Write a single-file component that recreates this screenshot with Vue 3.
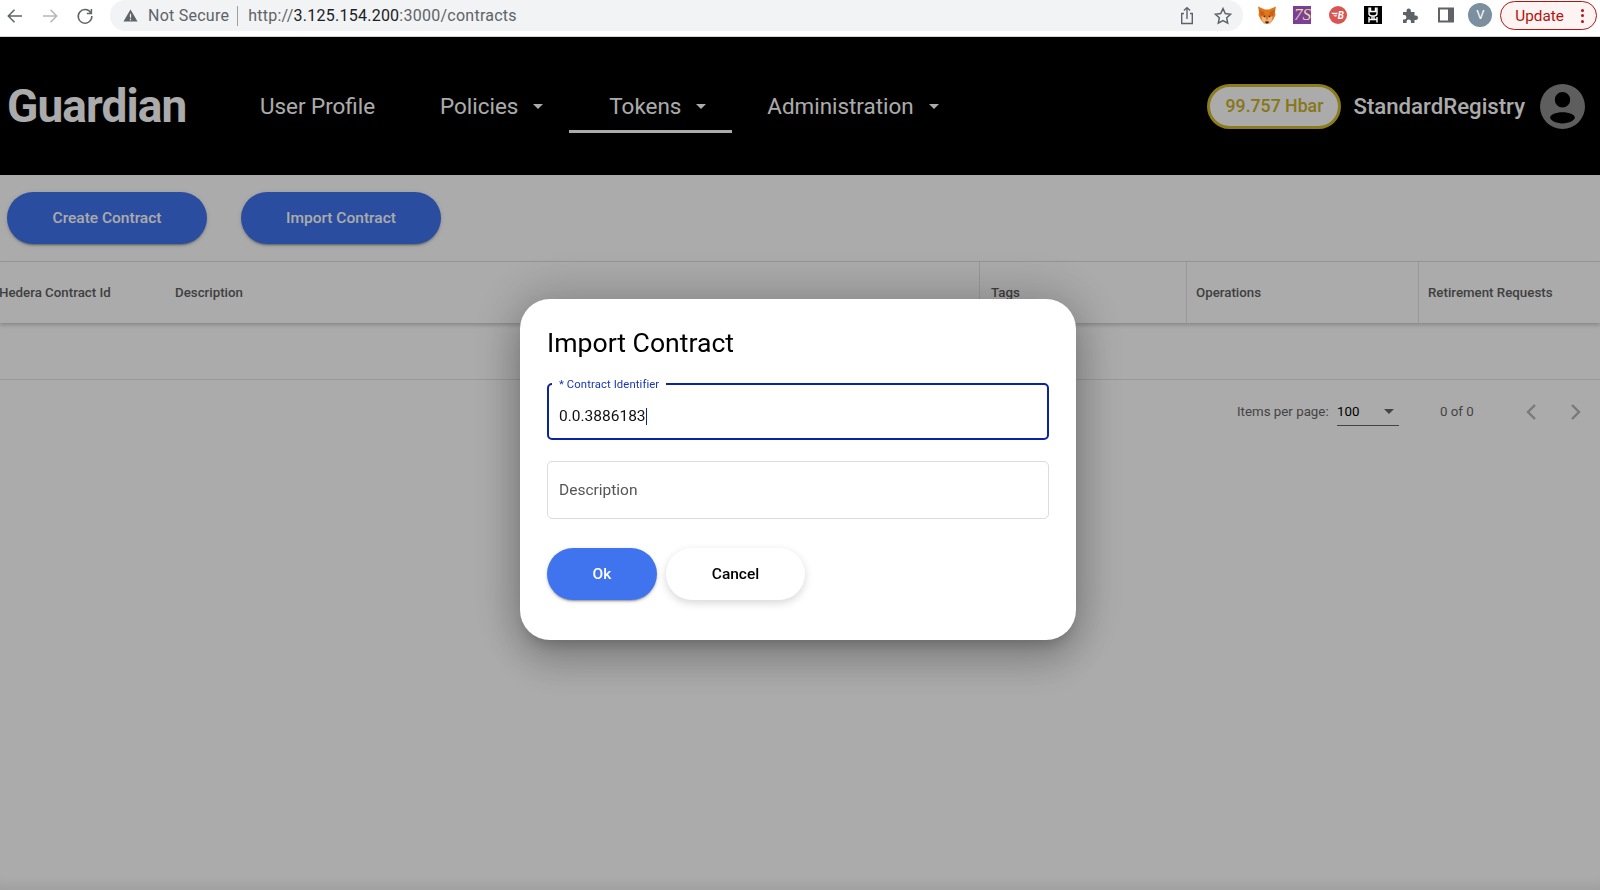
<template>
  <div class="page">
    <!-- browser toolbar -->
    <div class="chrome">
      <div class="nav-btns">
        <svg class="ic" viewBox="0 0 20 20" fill="none" stroke="#5f6368" stroke-width="1.5">
          <path d="M17 10H3.500M9.500 3.800 3.300 10l6.200 6.200" />
        </svg>
        <svg class="ic" viewBox="0 0 20 20" fill="none" stroke="#b4b7ba" stroke-width="1.5">
          <path d="M3 10h13.500M10.500 3.800l6.200 6.200-6.200 6.200" />
        </svg>
        <svg class="ic" viewBox="0 0 20 20" fill="none" stroke="#5f6368" stroke-width="1.5">
          <path d="M15.800 6.800A6.800 6.800 0 1 0 16.800 10" />
          <path d="M16.400 3v4.600h-4.600" />
        </svg>
      </div>
      <div class="omnibox">
        <svg class="warn" viewBox="0 0 16 16"><path d="M8 1.500 15.500 14.500H.5Z" fill="#5f6368" /><path d="M8 6v4.500M8 11.500v1.500" stroke="#f1f3f4" stroke-width="1.300" /></svg>
        <span class="secure">Not Secure</span>
        <span class="sep"></span>
        <span class="url">http://<b>3.125.154.200</b>:3000/contracts</span>
        <div class="omni-right">
          <svg class="ic" viewBox="0 0 20 20" fill="none" stroke="#5f6368" stroke-width="1.400">
            <path d="M7 7.500H4.700v10h10.600v-10H13M10 13V1.800M6.900 4.600 10 1.600l3.100 3" />
          </svg>
          <svg class="ic" viewBox="0 0 20 20" fill="none" stroke="#5f6368" stroke-width="1.500">
            <path d="m10 2.600 2.300 4.900 5.300.7-3.900 3.600 1 5.300-4.700-2.600-4.700 2.600 1-5.300-3.900-3.600 5.300-.7Z" />
          </svg>
        </div>
      </div>
      <div class="extensions">
        <svg class="ext" viewBox="0 0 18 18">
          <path d="M0 .5 7 3.500h4l7-3-1 5.500L17.500 9 15 14l-3 3.500H6L3 14 .5 9 1 6Z" fill="#e2761b" />
          <path d="M1 3.500 6 6 6.500 9 3 10ZM17 3.500 12 6 11.500 9 15 10Z" fill="#c9601a" />
          <path d="M3.500 10.500H7l2 4-3 3-2-3ZM14.500 10.500H11l-2 4 3 3 2-3Z" fill="#efb27a" />
          <path d="M5 10 7.500 9.500 7 11.500ZM13 10l-2.500-.5.500 2Z" fill="#3a2a1c" />
          <path d="M7 15.500h4L10 17.500H8Z" fill="#3a2a1c" />
        </svg>
        <div class="ext ext-zs">7S</div>
        <svg class="ext" viewBox="0 0 18 18">
          <circle cx="9" cy="9" r="9" fill="#d85552" />
          <path d="M1.800 6.800h7l-.6 1.500H4ZM4.200 9.200H8l-.5 1.400H5.800Z" fill="#fff" />
          <text x="8.700" y="13" class="ext-b">B</text>
        </svg>
        <svg class="ext" viewBox="0 0 18 18">
          <rect width="18" height="18" fill="#000" />
          <path d="M5 1.500v6c0 2 1.500 2.500 4 2.500s4-.5 4-2.500v-6M6.500 1.500v4h5v-4M5 16.500V11M13 16.500V11M5 13.500h8M8 10v3.500M10 10v3.500" fill="none" stroke="#fff" stroke-width="1.400" />
        </svg>
        <svg class="ext ext-sm" viewBox="0 0 16 16">
          <path d="M1 5h3.500V3.700a2.200 2.200 0 0 1 4.400 0V5h3.600v3.500h1.300a2.200 2.200 0 0 1 0 4.400h-1.300V16H9v-1.300a2.200 2.200 0 0 0-4.400 0V16H1v-3.600h1.200a2.200 2.200 0 0 0 0-4.400H1Z" fill="#5f6368" />
        </svg>
        <svg class="ext ext-sm" viewBox="0 0 16 16">
          <rect x="1" y="1.500" width="14" height="13" fill="none" stroke="#5f6368" stroke-width="2" />
          <rect x="10" y="1.500" width="5" height="13" fill="#5f6368" />
        </svg>
        <div class="profile">V</div>
      </div>
      <div class="update">
        <span>Update</span>
        <span class="dots"><i></i><i></i><i></i></span>
      </div>
    </div>

    <!-- app header -->
    <header class="app-header">
      <div class="brand">Guardian</div>
      <nav class="menu">
        <a v-for="item in menu" :key="item.label" class="menu-item" :class="{ active: item.active, plain: !item.caret }">
          {{ item.label }}
          <span v-if="item.caret" class="caret"></span>
        </a>
      </nav>
      <div class="account">
        <div class="balance">99.757 Hbar</div>
        <div class="user">StandardRegistry</div>
        <svg class="avatar" viewBox="0 0 24 24">
          <path fill-rule="evenodd" d="M12 0a12 12 0 1 1 0 24 12 12 0 0 1 0-24Zm0 4.300a4.100 4.100 0 1 0 0 8.200 4.100 4.100 0 0 0 0-8.200ZM12 15c-3.600 0-6.600 1.300-6.600 2.900 0 1.500 3 3.100 6.600 3.100s6.600-1.600 6.600-3.100c0-1.600-3-2.900-6.600-2.900Z" fill="#8c8c8c" />
        </svg>
      </div>
    </header>

    <!-- contracts page -->
    <main class="content">
      <div class="actions">
        <button class="btn btn-primary wide">Create Contract</button>
        <button class="btn btn-primary wide">Import Contract</button>
      </div>
      <div class="table-head">
        <div class="th first">Hedera Contract Id</div>
        <div class="th">Description</div>
        <div class="th bordered tags">Tags</div>
        <div class="th bordered">Operations</div>
        <div class="th bordered">Retirement Requests</div>
      </div>
      <div class="table-empty"></div>
      <div class="paginator">
        <span class="per-page">Items per page:</span>
        <div class="page-select">
          <span>100</span>
          <span class="select-arrow"></span>
        </div>
        <span class="range">0 of 0</span>
        <svg class="chev" viewBox="0 0 24 24" fill="none" stroke="#b5b5b5" stroke-width="2.400"><path d="M15 5l-7 7 7 7" /></svg>
        <svg class="chev" viewBox="0 0 24 24" fill="none" stroke="#b5b5b5" stroke-width="2.400"><path d="M9 5l7 7-7 7" /></svg>
      </div>
    </main>

    <!-- dialog -->
    <div class="overlay">
      <div class="dialog">
        <h2 class="dialog-title">Import Contract</h2>
        <div class="field focused">
          <label class="field-label">* Contract Identifier</label>
          <div class="field-value">{{ contractId }}<span class="text-caret"></span></div>
        </div>
        <div class="field">
          <input class="field-input" placeholder="Description" />
        </div>
        <div class="dialog-actions">
          <button class="btn btn-ok">Ok</button>
          <button class="btn btn-cancel">Cancel</button>
        </div>
      </div>
    </div>
  </div>
</template>

<script setup>
import { ref } from 'vue'

const contractId = ref('0.0.3886183')

const menu = [
  { label: 'User Profile', caret: false },
  { label: 'Policies', caret: true },
  { label: 'Tokens', caret: true, active: true },
  { label: 'Administration', caret: true }
]
</script>

<style>
html,
body {
  margin: 0;
  background: #fff;
  overflow: hidden;
}
</style>

<style scoped>
.page {
  height: 890px;
  display: flex;
  flex-direction: column;
  font-family: Roboto, "Liberation Sans", sans-serif;
  color: #000;
  overflow: hidden;
}

.chrome {
  height: 36px;
  flex: none;
  display: flex;
  align-items: flex-start;
  background: #fff;
  border-bottom: 1px solid #d4d4d4;
  box-sizing: content-box;
}

.nav-btns {
  display: flex;
  gap: 15px;
  padding: 6px 0 0 5px;
  width: 110px;
  box-sizing: border-box;
}

.ic {
  width: 20px;
  height: 20px;
  display: block;
}

.omnibox {
  width: 1133px;
  height: 31px;
  display: flex;
  align-items: center;
  background: #f1f3f4;
  border-radius: 16px;
  padding-left: 13px;
  box-sizing: border-box;
  font-size: 16px;
  letter-spacing: 0.25px;
  color: #5f6368;
}

.warn {
  width: 15px;
  height: 15px;
  margin-right: 10px;
}

.sep {
  width: 1px;
  height: 20px;
  background: #9aa0a6;
  margin: 0 10px 0 8px;
}

.url b {
  font-weight: 400;
  color: #202124;
}

.omni-right {
  margin-left: auto;
  display: flex;
  gap: 16px;
  padding-right: 10px;
}

.extensions {
  display: flex;
  align-items: center;
  height: 30px;
  padding-left: 15px;
  gap: 17.400px;
}

.ext {
  width: 18px;
  height: 18px;
  display: block;
}

.ext-sm {
  width: 16px;
  height: 16px;
  margin-left: 2.500px;
}

.ext-zs {
  background: #7b3f98;
  color: #e8d9a0;
  font: italic 17px/18px "Liberation Serif", serif;
  text-align: center;
  overflow: hidden;
}

.ext-b {
  font: italic 700 10px Roboto, sans-serif;
  fill: #fff;
}

.profile {
  width: 24px;
  height: 24px;
  border-radius: 50%;
  background: #7b8f9e;
  color: #fff;
  font-size: 13px;
  line-height: 24px;
  text-align: center;
  margin-left: -3px;
}

.update {
  margin: 1px 3px 0 8px;
  flex: 1;
  height: 29px;
  box-sizing: border-box;
  border: 1px solid #b3140d;
  border-radius: 15px;
  background: #fdf3f2;
  color: #b3140d;
  font-size: 15.300px;
  display: flex;
  align-items: center;
  padding-left: 14px;
}

.dots {
  margin-left: auto;
  margin-right: 12px;
  display: flex;
  flex-direction: column;
  gap: 2.500px;
}

.dots i {
  width: 3px;
  height: 3px;
  border-radius: 50%;
  background: #b3140d;
}

.app-header {
  height: 138px;
  flex: none;
  background: #000;
  color: #fff;
  display: flex;
  align-items: center;
  box-sizing: border-box;
}

.brand {
  width: 220px;
  padding-left: 7px;
  box-sizing: border-box;
  font-size: 46px;
  font-weight: 700;
  letter-spacing: -0.9px;
}

.menu {
  display: flex;
  height: 100%;
  align-items: center;
}

.menu-item {
  height: 54px;
  display: flex;
  align-items: center;
  gap: 15px;
  padding: 3px 26px 0 40px;
  font-size: 22.400px;
  font-weight: 400;
  border-bottom: 3px solid transparent;
  box-sizing: border-box;
}

.menu-item.plain {
  padding-right: 25px;
}

.menu-item:last-child {
  margin-left: -5px;
}

.menu-item.active {
  border-bottom-color: #fff;
}

.caret {
  width: 0;
  height: 0;
  border-left: 5.500px solid transparent;
  border-right: 5.500px solid transparent;
  border-top: 5.500px solid #fff;
}

.account {
  margin-left: auto;
  display: flex;
  align-items: center;
  padding-right: 15px;
}

.balance {
  width: 134px;
  height: 45px;
  box-sizing: border-box;
  border: 3px solid #d0b92a;
  border-radius: 23px;
  background: #fff;
  color: #c9b226;
  font-size: 17.700px;
  font-weight: 500;
  display: flex;
  align-items: center;
  justify-content: center;
}

.user {
  margin-left: 12px;
  font-size: 22.200px;
  font-weight: 500;
}

.avatar {
  width: 45px;
  height: 45px;
  margin-left: 15px;
}

.content {
  flex: 1;
  background: #fff;
  border-top: 1px solid #fff;
}

.actions {
  height: 86px;
  display: flex;
  align-items: center;
  gap: 34px;
  padding: 0 0 2px 7px;
  border-bottom: 1px solid #e4e4e4;
  box-sizing: border-box;
}

.btn {
  border: 0;
  border-radius: 26px;
  height: 52px;
  font-family: inherit;
  font-size: 15.500px;
  font-weight: 500;
  box-shadow: 0 3px 1px -2px rgba(0, 0, 0, 0.2), 0 2px 2px 0 rgba(0, 0, 0, 0.14), 0 1px 5px 0 rgba(0, 0, 0, 0.12);
}

.btn-primary {
  background: #4074ee;
  color: #fff;
}

.wide {
  width: 200px;
}

.table-head {
  display: grid;
  grid-template-columns: 175px 804px 207px 232px 182px;
  height: 61px;
  align-items: stretch;
  box-shadow: 0 2px 4px rgba(0, 0, 0, 0.22);
  position: relative;
}

.th {
  display: flex;
  align-items: center;
  font-size: 13.300px;
  font-weight: 500;
  color: #606060;
}

.th.first {
  margin-left: -1px;
}

.th.bordered {
  border-left: 1px solid #e4e4e4;
  padding-left: 9px;
}

.th.tags {
  padding-left: 11px;
}

.table-empty {
  height: 57px;
  border-bottom: 1px solid #e4e4e4;
  box-sizing: border-box;
}

.paginator {
  height: 64px;
  display: flex;
  align-items: center;
  padding-left: 1237px;
  font-size: 13.300px;
  color: #666;
  box-sizing: border-box;
  padding-bottom: 2px;
}

.per-page {
  width: 100px;
}

.page-select {
  width: 62px;
  height: 28px;
  display: flex;
  align-items: center;
  justify-content: space-between;
  color: #000;
  border-bottom: 1px solid #666;
  box-sizing: border-box;
  padding-right: 5px;
  margin-top: 2px;
}

.select-arrow {
  width: 0;
  height: 0;
  border-left: 5.500px solid transparent;
  border-right: 5.500px solid transparent;
  border-top: 5.500px solid #666;
}

.range {
  margin-left: 41px;
  width: 72px;
}

.chev {
  width: 24px;
  height: 24px;
  margin-left: 8px;
  margin-top: 2px;
}

.chev + .chev {
  margin-left: 19px;
}

.overlay {
  position: fixed;
  left: 0;
  right: 0;
  top: 37px;
  bottom: 0;
  background: rgba(0, 0, 0, 0.33);
  box-shadow: inset 0 -14px 14px -10px rgba(0, 0, 0, 0.09);
  display: flex;
  justify-content: center;
  align-items: flex-start;
  padding: 262px 4px 0 0;
  box-sizing: border-box;
}

.dialog {
  width: 556px;
  height: 341px;
  box-sizing: border-box;
  padding: 27px 27px 0;
  background: #fff;
  border-radius: 30px;
  box-shadow: 0 11px 15px -7px rgba(0, 0, 0, 0.2), 0 24px 38px 3px rgba(0, 0, 0, 0.14), 0 0 46px 8px rgba(0, 0, 0, 0.2);
}

.dialog-title {
  margin: 0;
  padding: 1px 0 0;
  font-size: 26.600px;
  font-weight: 400;
  line-height: 32px;
  height: 57px;
  box-sizing: border-box;
}

.field {
  position: relative;
  height: 58px;
  border: 1px solid #dcdcdc;
  border-radius: 5px;
  box-sizing: border-box;
  margin-bottom: 22px;
  display: flex;
  align-items: center;
  padding: 0 11px;
}

.field.focused {
  height: 57px;
  margin-bottom: 21px;
  border: 2px solid #0a23a0;
  padding: 9px 10px 0;
}

.field-label {
  position: absolute;
  left: 3px;
  top: -6px;
  padding: 0 7px;
  background: #fff;
  font-size: 11.300px;
  line-height: 12px;
  color: #1a36b0;
  letter-spacing: 0.1px;
}

.field-value {
  font-size: 15.500px;
  display: flex;
  align-items: center;
  color: #111;
}

.text-caret {
  width: 1px;
  height: 17px;
  background: #0a23a0;
}

.field-input {
  border: 0;
  outline: 0;
  width: 100%;
  padding: 0;
  font-family: inherit;
  font-size: 15.500px;
}

.field-input::placeholder {
  color: #555;
  opacity: 1;
}

.dialog-actions {
  display: flex;
  gap: 9px;
  padding-top: 7px;
}

.btn-ok {
  width: 110px;
  background: #4074ee;
  color: #fff;
}

.btn-cancel {
  width: 139px;
  background: #fff;
  color: #000;
  box-shadow: 0 3px 8px rgba(0, 0, 0, 0.16);
}
</style>
